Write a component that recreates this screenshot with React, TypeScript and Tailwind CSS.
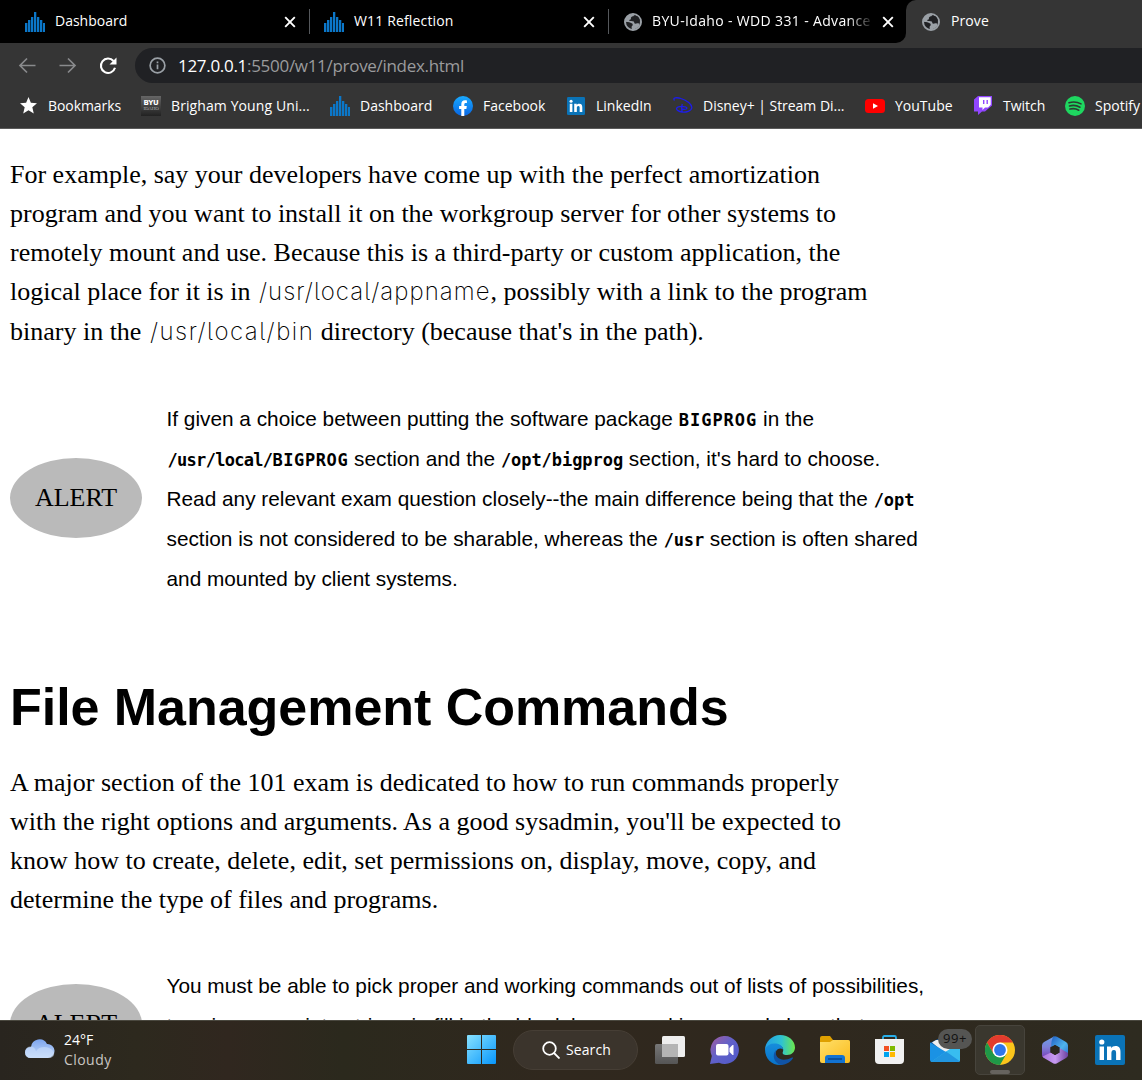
import React from "react";

const DashIcon = ({ className }: { className?: string }) => (
  <svg viewBox="0 0 20 20" className={"h-5 w-5 shrink-0 " + (className ?? "")} fill="#0b77c9">
    <path d="M0 11h2.400v9H0zM3 8h2.400v12H3zM6 5h2.300v15H6zM9 0h2.300v20H9zM12 5h2.300v15H12zM15 8h2.300v12H15zM18 11h2v9h-2z" />
  </svg>
);

const GlobeIcon = () => (
  <svg viewBox="0 0 18 18" className="h-[18px] w-[18px] shrink-0">
    <circle cx="9" cy="9" r="8" fill="#202124" stroke="#9aa0a6" strokeWidth="2" />
    <path d="M1 7.500C2 3.500 5.500 1 9.500 1.200L10 3C8.500 3.300 7.500 3.500 7 4.500c-.3.800.3 1.400-.5 1.900-.8.400-1.500.2-1.300 1.200.3.900 3.300.3 4.500 1 .9.700.2 1.700 1.100 2 .9.300 2.300-.8 3.500-.3.900.4 1.300 1 1.200 1.900-1.500 2.800-4.500 4.300-7.500 3.800L7.500 14c.1-1.200 1.200-1.200 1.200-2.100.2-1.300-.6-1.600-2.100-2.200C5 9 2.500 9.500 1.500 8.300z" fill="#9aa0a6" />
    <path d="M11 2.500l2.500.8c1.500 1.200 2.500 3 2.400 5-.9.300-1.600-.4-2.500-.2-.6.200-1 .7-1.700.4-.8-.4-.3-1.500-1.200-1.900-.9-.3-1.600.2-2.300-.3.200-1 1.200-.8 1.700-1.500.4-.8.400-1.500 1.100-2.300z" fill="#202124" />
  </svg>
);

const Close = () => (
  <svg viewBox="0 0 12 12" className="h-3 w-3 shrink-0" stroke="#fff" strokeWidth="1.9">
    <path d="M1.200 1.200l9.600 9.600M10.800 1.200L1.200 10.800" />
  </svg>
);

const Code = ({ children, className }: { children: string; className: string }) => (
  <span className={"leading-none " + className}>{children}</span>
);

const light = "ml-[2px] font-['Inter'] font-extralight text-[24px] text-black [font-feature-settings:'cv05']";
const bold = "font-['DejaVu_Sans_Mono'] font-bold text-[17px] text-black";

const Alert = () => (
  <div className="flex h-20 w-[132px] shrink-0 items-center justify-center rounded-[50%] bg-[#bababa] pb-[2px] font-['Liberation_Serif',serif] text-[26px]">
    ALERT
  </div>
);

function TabBar() {
  return (
    <div className="flex h-[43px] bg-black text-[14px] text-white">
      <div className="flex w-[309px] items-center pr-[13px] pl-[25px]">
        <DashIcon />
        <span className="ml-[10px] flex-1 pb-[2px]">Dashboard</span>
        <Close />
      </div>
      <div className="mt-[9px] h-[25px] w-px bg-[#55585c]" />
      <div className="flex w-[298px] items-center pr-[13px] pl-[14px]">
        <DashIcon />
        <span className="ml-[10px] flex-1 pb-[2px] tracking-[0.15px]">W11 Reflection</span>
        <Close />
      </div>
      <div className="mt-[9px] h-[25px] w-px bg-[#55585c]" />
      <div className="flex w-[297px] bg-[#353535]">
        <div className="flex flex-1 items-center rounded-br-[10px] bg-black pr-[12px] pl-[15px]">
          <GlobeIcon />
          <span className="ml-[10px] w-[222px] overflow-hidden pb-[2px] tracking-[0.35px] whitespace-nowrap [mask-image:linear-gradient(to_right,black_88%,transparent)]">BYU-Idaho - WDD 331 - Advance</span>
          <div className="ml-auto"><Close /></div>
        </div>
      </div>
      <div className="flex flex-1 items-center rounded-tl-[10px] bg-[#353535] pl-[16px]">
        <GlobeIcon />
        <span className="ml-[11px] pb-[2px] tracking-[0.1px]">Prove</span>
      </div>
    </div>
  );
}

function AddressBar() {
  return (
    <div className="flex h-[45px] items-center pl-[18px]">
      <svg viewBox="0 0 18 18" className="h-[18px] w-[18px]" fill="none" stroke="#898a8c" strokeWidth="1.700">
        <path d="M17.500 8.500H2M9 1.500L2 8.500L9 15.500" />
      </svg>
      <svg viewBox="0 0 18 18" className="ml-[23px] h-[18px] w-[18px]" fill="none" stroke="#898a8c" strokeWidth="1.700">
        <path d="M.5 8.500H16M9 1.500L16 8.500L9 15.500" />
      </svg>
      <svg viewBox="0 0 18 18" className="ml-[22px] h-[18px] w-[18px]" fill="none" stroke="#fff" strokeWidth="2.100">
        <path d="M14.500 4A7.200 7.200 0 1 0 16 10.800" />
        <path d="M17.500 .5v7h-7z" fill="#fff" stroke="none" />
      </svg>
      <div className="ml-[18px] flex h-[35px] flex-1 items-center rounded-l-full bg-[#202124] pl-[14px]">
        <svg viewBox="0 0 18 18" className="h-[17px] w-[17px]" fill="none" stroke="#9aa0a6" strokeWidth="1.800">
          <circle cx="9" cy="9" r="7.800" />
          <path d="M9 8v5M9 4.700v1.900" />
        </svg>
        <span className="ml-[12px] text-[17px] tracking-[-0.3px] text-[#9a9b9d]"><span className="text-white">127.0.0.1</span>:5500/w11/prove/index.html</span>
      </div>
    </div>
  );
}

function Bookmark({ icon, label, className }: { icon: React.ReactNode; label: string; className: string }) {
  return (
    <div className={"flex shrink-0 items-center whitespace-nowrap " + className}>
      <div className="flex w-[30px] shrink-0 items-center">{icon}</div>
      <span>{label}</span>
    </div>
  );
}

function Bookmarks() {
  return (
    <div className="flex h-[41px] items-center overflow-hidden border-b border-[#5b5b5b] pb-[5px] pl-[18px] text-[14px] text-white">
      <Bookmark className="w-[123px] tracking-[-0.08px]" label="Bookmarks" icon={<svg viewBox="0 0 20 20" className="ml-[1.5px] h-[17px] w-[17px]" fill="#fff"><path d="M10 0l2.800 6.800 7.200.6-5.500 4.800 1.700 7.200L10 15.500 3.800 19.400l1.700-7.200L0 7.400l7.200-.6z" /></svg>} />
      <Bookmark className="w-[189px] tracking-[0.1px]" label="Brigham Young Uni..." icon={
        <div className="flex h-5 w-5 flex-col items-center justify-center bg-gradient-to-b from-[#666] to-[#222] font-['DejaVu_Sans'] leading-none">
          <span className="text-[7px] leading-[6px] font-bold tracking-[-0.2px]">BYU</span>
          <span className="font-['Liberation_Serif'] text-[5px] leading-[5px] tracking-[-0.2px] text-[#aaa]">IDAHO</span>
        </div>} />
      <Bookmark className="w-[123px]" label="Dashboard" icon={<DashIcon />} />
      <Bookmark className="w-[113px]" label="Facebook" icon={
        <svg viewBox="0 0 20 20" className="h-5 w-5"><defs><linearGradient id="fb" x2="0" y2="1"><stop stopColor="#19aaff" /><stop offset="1" stopColor="#0866e4" /></linearGradient></defs><circle cx="10" cy="10" r="10" fill="url(#fb)" /><path d="M8.300 20v-7H6.100v-3h2.200V8.300C8.300 5.600 9.700 4.200 12 4.200c.9 0 1.700.1 1.900.2v2.500h-1.200c-1.100 0-1.400.6-1.400 1.500V10h2.500l-.4 3h-2.100v7z" fill="#fff" /></svg>} />
      <Bookmark className="w-[107px]" label="LinkedIn" icon={<LinkedIn className="ml-px h-[18px] w-[18px]" />} />
      <Bookmark className="w-[192px] tracking-[-0.03px]" label="Disney+ | Stream Di..." icon={
        <svg viewBox="0 0 20 17" className="h-[17px] w-5" fill="none" stroke="#1d1dea" strokeWidth="1.300"><path d="M1.500 3.500C-1 .5 4 .2 8 1.500c6 1.800 11 6 10.800 9.300C18.500 14 13 15.500 9 15c-3-.4-6-2-5.400-3.800C4.200 9.600 8 9 11 9.600c3 .5 3.500 1.700 2 2.400-1.500.6-3.500.3-5-.3M9.300 7c-.6 2-.7 5.500-.1 8" /></svg>} />
      <Bookmark className="w-[108px]" label="YouTube" icon={<svg viewBox="0 0 20 14" className="h-[14px] w-5"><rect width="20" height="14" rx="3.500" fill="#f00" /><path d="M8 4.200l5 2.800-5 2.800z" fill="#fff" /></svg>} />
      <Bookmark className="w-[92px]" label="Twitch" icon={<svg viewBox="0 0 18 19" className="ml-px h-[19px] w-[18px]"><path d="M4 0L0 3.500v12h4V19l4-3.500h3l7-6V0z" fill="#9146ff" /><path d="M5 1.300h11.700v7.500L14 11.500h-3L8.500 14v-2.500H5z" fill="#fff" /><path d="M9 4h1.400v4H9zM12.500 4h1.400v4h-1.400z" fill="#9146ff" /></svg>} />
      <Bookmark className="" label="Spotify" icon={<svg viewBox="0 0 20 20" className="h-5 w-5"><circle cx="10" cy="10" r="10" fill="#1ed760" /><path d="M4 6.700c4-1.200 8.500-.8 12 1.200M4.500 10c3.500-1 7.300-.6 10.500 1.200M5 13.100c3-.8 6-.5 8.800 1.100" fill="none" stroke="#2c3a30" strokeWidth="1.600" strokeLinecap="round" /></svg>} />
    </div>
  );
}

const LinkedIn = ({ className }: { className: string }) => (
  <svg viewBox="0 0 30 30" className={className}>
    <rect width="30" height="30" rx="2" fill="#0a73b7" />
    <circle cx="6.800" cy="7" r="2.600" fill="#fff" />
    <path d="M4.600 11.400H9V25H4.600zM12 11.400h4.200v1.900c.8-1.400 2.300-2.200 4.200-2.200 4.200 0 5.100 2.700 5.100 6.400V25h-4.400v-6.600c0-1.700-.1-3.500-2.200-3.500-2.100 0-2.500 1.700-2.500 3.400V25H12z" fill="#fff" />
  </svg>
);

const serifText = "font-['Liberation_Serif',serif] text-[26px] leading-[39px] whitespace-nowrap";
const sansText = "font-['Liberation_Sans',sans-serif] text-[20.8px] leading-[40px] whitespace-nowrap";

function Article() {
  return (
    <main className="h-[891px] overflow-hidden bg-white pl-[10px] text-black">
      <div className={"pt-[26px] " + serifText}>
        <div>For example, say your developers have come up with the perfect amortization</div>
        <div>program and you want to install it on the workgroup server for other systems to</div>
        <div>remotely mount and use. Because this is a third-party or custom application, the</div>
        <div>logical place for it is in <Code className={light + " tracking-[1.05px]"}>/usr/local/appname</Code>, possibly with a link to the program</div>
        <div className="pt-px">binary in the <Code className={light + " tracking-[1.5px]"}>/usr/local/bin</Code> directory (because that's in the path).</div>
      </div>
      <div className="mt-[48px] flex items-start">
        <div className="mt-[59px]"><Alert /></div>
        <div className={"ml-[24.5px] " + sansText}>
          <div>If given a choice between putting the software package <Code className={bold + " tracking-[1px]"}>BIGPROG</Code> in the</div>
          <div><Code className={bold + " ml-px tracking-[-0.7px]"}>/usr/local/</Code><Code className={bold + " tracking-[0.6px]"}>BIGPROG</Code> section and the <Code className={bold + " tracking-[-0.05px]"}>/opt/bigprog</Code> section, it's hard to choose.</div>
          <div>Read any relevant exam question closely--the main difference being that the <Code className={bold}>/opt</Code></div>
          <div>section is not considered to be sharable, whereas the <Code className={bold + " tracking-[-0.15px]"}>/usr</Code> section is often shared</div>
          <div>and mounted by client systems.</div>
        </div>
      </div>
      <h1 className="mt-[76px] font-['Liberation_Sans',sans-serif] text-[52px] leading-[64px] font-bold tracking-[-0.04px] whitespace-nowrap">File Management Commands</h1>
      <div className={"mt-[24px] " + serifText}>
        <div>A major section of the 101 exam is dedicated to how to run commands properly</div>
        <div>with the right options and arguments. As a good sysadmin, you'll be expected to</div>
        <div>know how to create, delete, edit, set permissions on, display, move, copy, and</div>
        <div>determine the type of files and programs.</div>
      </div>
      <div className="mt-[47px] flex items-start">
        <div className="mt-[18px]"><Alert /></div>
        <div className={"ml-[24.5px] " + sansText}>
          <div>You must be able to pick proper and working commands out of lists of possibilities,</div>
          <div>type in appropriate strings in fill in the blank boxes, and in general show that</div>
        </div>
      </div>
    </main>
  );
}

function Taskbar() {
  return (
    <div className="flex h-[60px] items-center border-t border-[#4a483f] bg-[linear-gradient(90deg,#29251f,#2d291e_12%,#30271f_20%,#2b291d_30%,#30281e_48%,#2f281e_70%,#2e2b20)] pb-[2px] text-white">
      <svg viewBox="0 0 30 19" className="mb-[3px] ml-[25px] h-[19px] w-[30px]">
        <defs><linearGradient id="cl" x2="0" y2="1"><stop stopColor="#7da5ee" /><stop offset="1" stopColor="#c5dbfb" /></linearGradient></defs>
        <path d="M5.500 19a5.500 5.500 0 0 1 0-11H6a8.500 8.500 0 0 1 16-3 7 7 0 0 1 1 14z" fill="url(#cl)" />
        <path d="M0 13.500a5.500 5.500 0 0 1 11-1c3-6 14-6 18 1 .8 3-1.500 5.500-5 5.500H5.500A5.500 5.500 0 0 1 0 13.500z" fill="#cfe1fc" opacity=".55" />
      </svg>
      <div className="ml-[9px] w-[52px] text-[14px] leading-5">
        <div>24°F</div>
        <div className="tracking-[0.45px] text-[#c9c6c2]">Cloudy</div>
      </div>
      <svg viewBox="0 0 29 29" className="ml-[351px] h-[29px] w-[29px]">
        <defs><linearGradient id="win" x2="1" y2="1"><stop stopColor="#88e2ff" /><stop offset="1" stopColor="#0796fc" /></linearGradient></defs>
        <path d="M1 0h13v14H0V1q0-1 1-1zM15 0h13q1 0 1 1v13H15zM0 15h14v14H1q-1 0-1-1zM15 15h14v13q0 1-1 1H15z" fill="url(#win)" />
      </svg>
      <div className="ml-[17px] flex h-10 w-[125px] items-center rounded-full border border-[#463e35] bg-[#3b342c] pl-[28px] text-[14px]">
        <svg viewBox="0 0 18 18" className="h-[18px] w-[18px]" fill="none" stroke="#fff" strokeWidth="1.800"><circle cx="7.500" cy="7.500" r="6.300" /><path d="M12 12l5.500 5.500" /></svg>
        <span className="ml-[6px] tracking-[0.1px]">Search</span>
      </div>
      <svg viewBox="0 0 30 28" className="ml-[17px] h-7 w-[30px]">
        <defs><linearGradient id="tv" x2="0" y2="1"><stop stopColor="#777" /><stop offset="1" stopColor="#555" /></linearGradient></defs>
        <rect y="8" width="23" height="20" rx="1.500" fill="url(#tv)" /><rect x="7" width="23" height="21" rx="1.500" fill="#eee" /><path d="M7 8h16v13H8q-1 0-1-1z" fill="#b4b4b4" />
      </svg>
      <svg viewBox="0 0 29 28" className="ml-[25px] h-7 w-[29px]">
        <defs><linearGradient id="ch" x2="1" y2="1"><stop stopColor="#a75c9d" /><stop offset=".45" stopColor="#6161c9" /><stop offset="1" stopColor="#5059c9" /></linearGradient></defs>
        <path d="M15 0a14 14 0 1 1-6 26.700L0 28l1.800-8A14 14 0 0 1 15 0z" fill="url(#ch)" /><rect x="6" y="8" width="12.500" height="11.500" rx="2" fill="#fff" /><path d="M19.500 12l3-3h1v10h-1l-3-3z" fill="#fff" />
      </svg>
      <svg viewBox="0 0 30 30" className="ml-[26px] h-[30px] w-[30px]">
        <defs><linearGradient id="e1" x2="1"><stop stopColor="#229ee5" /><stop offset=".55" stopColor="#2fc2d1" /><stop offset="1" stopColor="#6ce84c" /></linearGradient><linearGradient id="e2" x2="0" y2="1"><stop stopColor="#168ddc" /><stop offset="1" stopColor="#0872c9" /></linearGradient></defs>
        <path d="M0 15C0 7 7 0 15 0c9 0 15 6 15 12.500 0 4-3 7.500-8 7.500-4 0-5-1.500-4-3.500 1.500-4-3-7-7-7C6 9.500 1 12 0 15z" fill="url(#e1)" />
        <path d="M0 14c2-4 6-6 11-5.500 4 .3 7 3 7 6-2-2-6-1-7 2-2 6 2 12 8 13C9 31.500 0 26 0 14z" fill="url(#e2)" />
        <path d="M11 15c-2 7 5 13 16 7.500.8-.3 1.300.2.900.8C25 28 20 30 16 30c-7-2-9.500-10-5-15z" fill="#1053a5" />
      </svg>
      <svg viewBox="0 0 30 27" className="ml-[25px] h-[27px] w-[30px]">
        <defs><linearGradient id="fo" x2="1" y2="1"><stop stopColor="#ffdf69" /><stop offset="1" stopColor="#fbbc1d" /></linearGradient></defs>
        <path d="M0 2q0-2 2-2h8l3 4h15q2 0 2 2v8H0z" fill="#dfa000" /><path d="M0 6h10l3-2h15q2 0 2 2v19q0 2-2 2H2q-2 0-2-2z" fill="url(#fo)" /><path d="M5 27v-5q0-3 3-3h14q3 0 3 3v5z" fill="#1273d2" /><path d="M8 23h14" stroke="#07468d" strokeWidth="1.500" />
      </svg>
      <svg viewBox="0 0 29 29" className="ml-[25px] h-[29px] w-[29px]">
        <path d="M8 5V2.500Q8 1 9.500 1h10Q21 1 21 2.500V5" fill="none" stroke="#28afea" strokeWidth="1.800" /><path d="M0 4h29v21q0 4-4 4H4q-4 0-4-4z" fill="#f1f1f1" /><path d="M9 11h5v5H9z" fill="#f25022" /><path d="M15 11h5v5h-5z" fill="#7fba00" /><path d="M9 17h5v5H9z" fill="#00a4ef" /><path d="M15 17h5v5h-5z" fill="#ffb900" />
      </svg>
      <div className="relative ml-[26px] h-[24px] w-[30px]">
        <svg viewBox="0 0 30 24" className="h-6 w-[30px]">
          <path d="M0 5L10 0h10l10 5v6H0z" fill="#115ca8" /><path d="M2 4.500L6 2h20v6L16 16z" fill="#f0f0f0" /><path d="M0 4.500L16 14l14 8q0 2-2 2H2q-2 0-2-2z" fill="#1a92e4" /><path d="M30 4.500v17.500q0 2-2 2H1L16 13.500z" fill="#38bdf0" /><path d="M16 13.500L29.500 23q-.5 1-1.500 1H1z" fill="#2196e0" />
        </svg>
        <div className="absolute -top-[9px] left-2 flex h-[20px] w-[34px] items-center justify-center rounded-full bg-[#555553] text-[13px] leading-none tracking-[0.5px] text-[#111]">99+</div>
      </div>
      <div className="relative ml-[15px] flex h-[50px] w-[50px] items-center justify-center rounded-[5px] border border-[#47443c] bg-[#3a372e]">
        <svg viewBox="0 0 30 30" className="h-[30px] w-[30px]">
          <circle cx="15" cy="15" r="15" fill="#fbc51b" /><path d="M2 7.500A15 15 0 0 1 28 7.500H15L8.500 18.700z" fill="#e33b2e" /><path d="M2 7.500A15 15 0 0 0 15 30l6.500-11.200H8.500z" fill="#1f9848" /><circle cx="15" cy="15" r="7.500" fill="#fff" /><circle cx="15" cy="15" r="5.900" fill="#2f76ea" />
        </svg>
        <div className="absolute bottom-0 h-1 w-5 rounded-full bg-[#66635e]" />
      </div>
      <svg viewBox="0 0 26 28" className="ml-[17px] h-7 w-[26px]">
        <defs><linearGradient id="m1" x2="0" y2="1"><stop stopColor="#6a9fe8" /><stop offset=".5" stopColor="#7d7fd8" /><stop offset="1" stopColor="#7a3fb8" /></linearGradient><linearGradient id="m2" x2="1" y2="1"><stop stopColor="#1f5fc4" /><stop offset=".6" stopColor="#4fb4ee" /><stop offset="1" stopColor="#2e6fd0" /></linearGradient><linearGradient id="m3" x2="1"><stop stopColor="#a874dd" /><stop offset=".5" stopColor="#c79af0" /><stop offset="1" stopColor="#6c419f" /></linearGradient></defs>
        <path d="M12 .5L2 6Q0 7 0 9.500V19q0 2 2 3l6.500-4v-7L14 8z" fill="url(#m1)" />
        <path d="M11 .8q2-1.300 4 0L24 6q2 1 2 3.500V20l-8.500-4v-4.500L13 9l-3.500 2q-1-4 1.500-10.200z" fill="url(#m2)" />
        <path d="M.5 20.500L9 16.500 13 19l4.500-2.500V12l8.500 5v2q0 2-2 3l-9 5.300q-2 1-4 0L2 22z" fill="url(#m3)" />
        <path d="M13 9l4.500 2.500v5L13 19l-4.500-2.500v-5z" fill="#2b281f" />
      </svg>
      <LinkedIn className="ml-[27px] h-[30px] w-[30px]" />
    </div>
  );
}

export default function App() {
  return (
    <div className="h-[1080px] w-[1142px] overflow-hidden bg-white font-['Open_Sans',sans-serif]">
      <header className="h-[129px] bg-[#353535]">
        <TabBar />
        <AddressBar />
        <Bookmarks />
      </header>
      <Article />
      <Taskbar />
    </div>
  );
}
